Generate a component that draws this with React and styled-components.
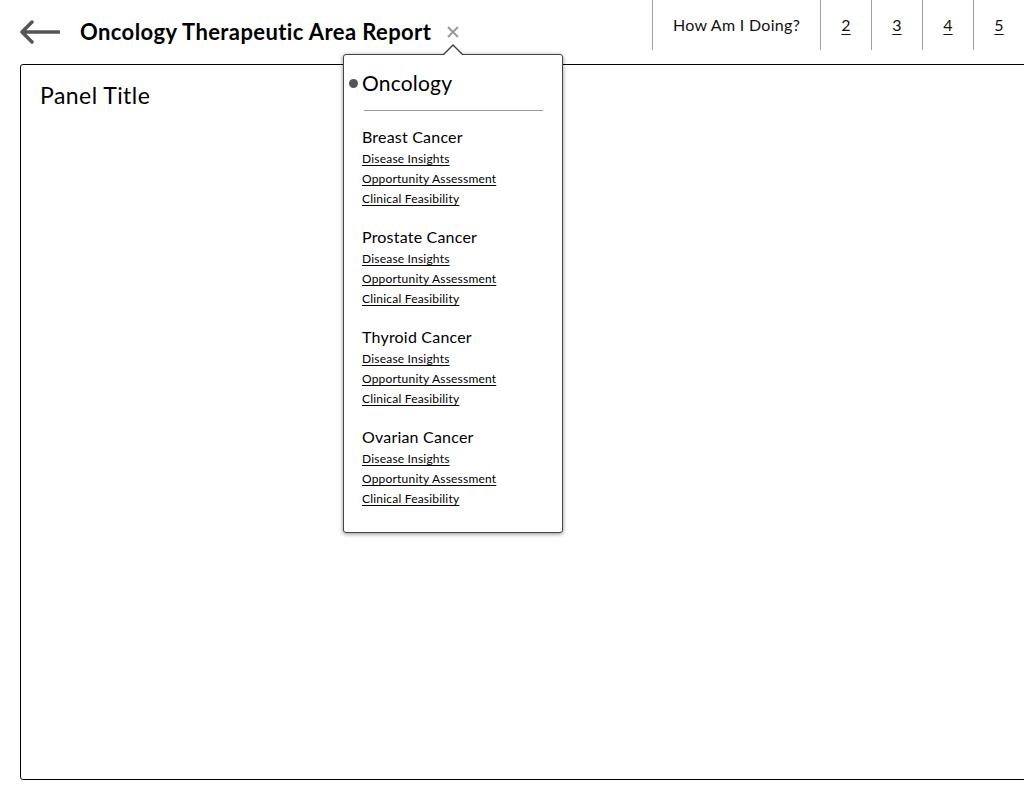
import React from "react";
import styled, { createGlobalStyle } from "styled-components";

const Global = createGlobalStyle`
  html, body { margin: 0; padding: 0; background: #fff; overflow: hidden; }
  body { font-family: Lato, "Open Sans", sans-serif; color: #111; }
`;

const Page = styled.div`
  position: relative;
  width: 1024px;
  height: 800px;
  overflow: hidden;
`;

const Header = styled.header`
  display: flex;
  align-items: flex-start;
  height: 64px;
`;

const TitleRow = styled.div`
  display: flex;
  align-items: center;
  height: 64px;
  padding-left: 20px;
  flex: 1;
`;

const BackButton = styled.button`
  border: 0;
  background: none;
  padding: 0;
  margin: 0 20px 0 0;
  width: 40px;
  height: 24px;
  display: flex;
  align-items: center;
  cursor: pointer;
`;

const Title = styled.h1`
  margin: 0;
  font-size: 22px;
  font-weight: 700;
  letter-spacing: 0.4px;
  color: #000;
  line-height: 30px;
`;

const CloseBtn = styled.button`
  border: 0;
  background: none;
  padding: 0;
  margin-left: 16px;
  width: 12px;
  height: 12px;
  display: flex;
  cursor: pointer;
`;

const Nav = styled.nav`
  display: flex;
  height: 50px;
`;

const NavItem = styled.a`
  display: flex;
  align-items: center;
  justify-content: center;
  border-left: 1px solid #a0a0a0;
  height: 50px;
  box-sizing: border-box;
  padding: 0 ${(p) => (p.$wide ? "18px" : "0")} 2px;
  width: ${(p) => (p.$wide ? "168px" : "51px")};
  font-size: 16px;
  letter-spacing: ${(p) => (p.$wide ? "0.3px" : "0")};
  color: #111;
  text-decoration: ${(p) => (p.$underline ? "underline" : "none")};
  text-underline-offset: 3px;
  white-space: nowrap;
`;

const Panel = styled.section`
  margin-left: 20px;
  width: 1030px;
  height: 716px;
  box-sizing: border-box;
  border: 1px solid #000;
  border-radius: 3px;
  padding: 15px 19px;
`;

const PanelTitle = styled.h2`
  margin: 0;
  font-size: 23px;
  font-weight: 400;
  letter-spacing: 0.45px;
  line-height: 30px;
  color: #000;
`;

const Popover = styled.div`
  position: absolute;
  left: 343px;
  top: 54px;
  width: 220px;
  box-sizing: border-box;
  background: #fff;
  border: 1px solid #444;
  border-radius: 3px;
  box-shadow: 0 1px 4px rgba(0, 0, 0, 0.45);
  padding: 14px 18px 23px 18px;

  &::before,
  &::after {
    content: "";
    position: absolute;
    left: 99px;
    width: 0;
    height: 0;
    border-left: 10px solid transparent;
    border-right: 10px solid transparent;
  }
  &::before {
    top: -11px;
    border-bottom: 10px solid #444;
  }
  &::after {
    top: -9px;
    border-bottom: 10px solid #fff;
  }
`;

const PopHeading = styled.div`
  position: relative;
  font-size: 21px;
  letter-spacing: 0.2px;
  line-height: 28px;
  color: #000;

  &::before {
    content: "";
    position: absolute;
    left: -13px;
    top: 10px;
    width: 9px;
    height: 9px;
    border-radius: 50%;
    background: #555;
  }
`;

const Divider = styled.hr`
  border: 0;
  border-top: 1px solid #999;
  margin: 13px 1px 15px 2px;
`;

const Section = styled.div`
  & + & {
    margin-top: 17px;
  }
`;

const SectionTitle = styled.div`
  font-size: 16px;
  letter-spacing: 0.2px;
  line-height: 22px;
  margin-bottom: 1px;
  color: #000;
`;

const LinkItem = styled.a`
  display: block;
  font-size: 12px;
  letter-spacing: 0.2px;
  line-height: 20px;
  color: #000;
  text-decoration: underline;
  text-underline-offset: 2px;
`;

const sections = ["Breast Cancer", "Prostate Cancer", "Thyroid Cancer", "Ovarian Cancer"];
const links = ["Disease Insights", "Opportunity Assessment", "Clinical Feasibility"];

export default function App() {
  return (
    <Page>
      <Global />
      <Header>
        <TitleRow>
          <BackButton aria-label="Back">
            <svg width="40" height="24" viewBox="0 0 40 24">
              <path
                d="M39 12 H3 M12 2 L2 12 L12 22"
                fill="none"
                stroke="#555"
                strokeWidth="3.5"
                strokeLinecap="round"
                strokeLinejoin="round"
              />
            </svg>
          </BackButton>
          <Title>Oncology Therapeutic Area Report</Title>
          <CloseBtn aria-label="Close">
            <svg width="12" height="12" viewBox="0 0 12 12">
              <path d="M1 1 L11 11 M11 1 L1 11" stroke="#999" strokeWidth="2" />
            </svg>
          </CloseBtn>
        </TitleRow>
        <Nav>
          <NavItem $wide>How Am I Doing?</NavItem>
          <NavItem $underline>2</NavItem>
          <NavItem $underline>3</NavItem>
          <NavItem $underline>4</NavItem>
          <NavItem $underline>5</NavItem>
        </Nav>
      </Header>
      <Panel>
        <PanelTitle>Panel Title</PanelTitle>
      </Panel>
      <Popover>
        <PopHeading>Oncology</PopHeading>
        <Divider />
        {sections.map((s) => (
          <Section key={s}>
            <SectionTitle>{s}</SectionTitle>
            {links.map((l) => (
              <LinkItem key={l}>{l}</LinkItem>
            ))}
          </Section>
        ))}
      </Popover>
    </Page>
  );
}
